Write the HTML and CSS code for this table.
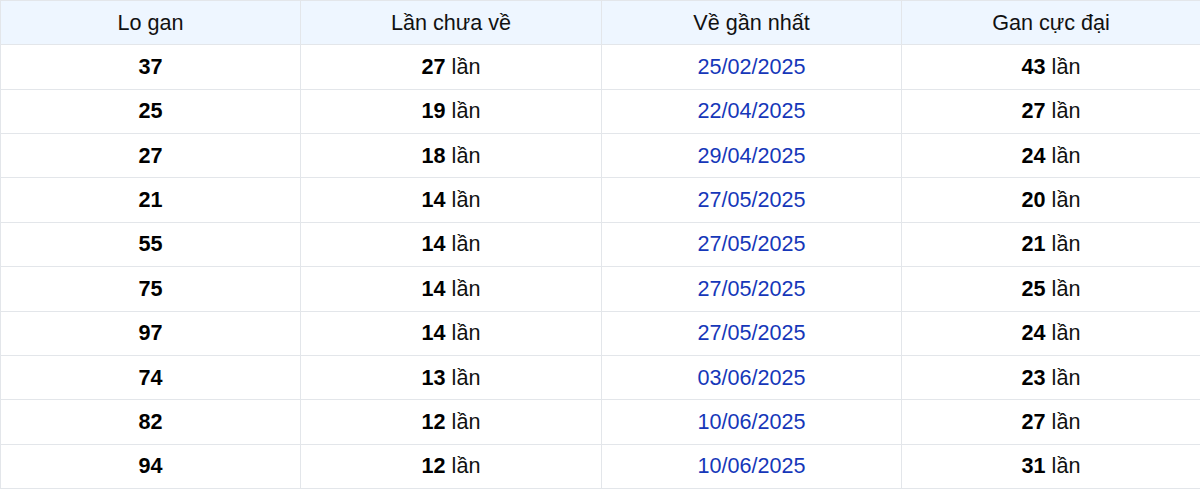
FILE: index.html
```html
<!DOCTYPE html>
<html lang="vi">
<head>
<meta charset="utf-8">
<title>Lo gan</title>
<link rel="stylesheet" href="styles.css">
</head>
<body>
<table class="gan-table">
  <colgroup>
    <col class="c1"><col class="c2"><col class="c3"><col class="c4">
  </colgroup>
  <thead>
    <tr><th>Lo gan</th><th>Lần chưa về</th><th>Về gần nhất</th><th>Gan cực đại</th></tr>
  </thead>
  <tbody>
    <tr><td><b>37</b></td><td><b>27</b> lần</td><td class="date">25/02/2025</td><td><b>43</b> lần</td></tr>
    <tr><td><b>25</b></td><td><b>19</b> lần</td><td class="date">22/04/2025</td><td><b>27</b> lần</td></tr>
    <tr><td><b>27</b></td><td><b>18</b> lần</td><td class="date">29/04/2025</td><td><b>24</b> lần</td></tr>
    <tr><td><b>21</b></td><td><b>14</b> lần</td><td class="date">27/05/2025</td><td><b>20</b> lần</td></tr>
    <tr><td><b>55</b></td><td><b>14</b> lần</td><td class="date">27/05/2025</td><td><b>21</b> lần</td></tr>
    <tr><td><b>75</b></td><td><b>14</b> lần</td><td class="date">27/05/2025</td><td><b>25</b> lần</td></tr>
    <tr><td><b>97</b></td><td><b>14</b> lần</td><td class="date">27/05/2025</td><td><b>24</b> lần</td></tr>
    <tr><td><b>74</b></td><td><b>13</b> lần</td><td class="date">03/06/2025</td><td><b>23</b> lần</td></tr>
    <tr><td><b>82</b></td><td><b>12</b> lần</td><td class="date">10/06/2025</td><td><b>27</b> lần</td></tr>
    <tr><td><b>94</b></td><td><b>12</b> lần</td><td class="date">10/06/2025</td><td><b>31</b> lần</td></tr>
  </tbody>
</table>
</body>
</html>
```
FILE: styles.css
```css
html, body {
  margin: 0;
  padding: 0;
  background: #ffffff;
}
body {
  font-family: "Liberation Sans", Arial, sans-serif;
  color: #111111;
}
.gan-table {
  width: 1200px;
  border-collapse: collapse;
  table-layout: fixed;
  font-size: 21.6px;
}
.gan-table .c1 { width: 300px; }
.gan-table .c2 { width: 301px; }
.gan-table .c3 { width: 300px; }
.gan-table .c4 { width: 299px; }
.gan-table th,
.gan-table td {
  border: 1px solid #e3e6ea;
  text-align: center;
  vertical-align: middle;
  padding: 0;
  height: 43.36px;
  line-height: 24px;
}
.gan-table th {
  background: #eef6ff;
  font-weight: normal;
  color: #111111;
}
.gan-table td b {
  font-weight: bold;
  color: #000000;
}
.gan-table td.date {
  color: #1637b9;
}
```
